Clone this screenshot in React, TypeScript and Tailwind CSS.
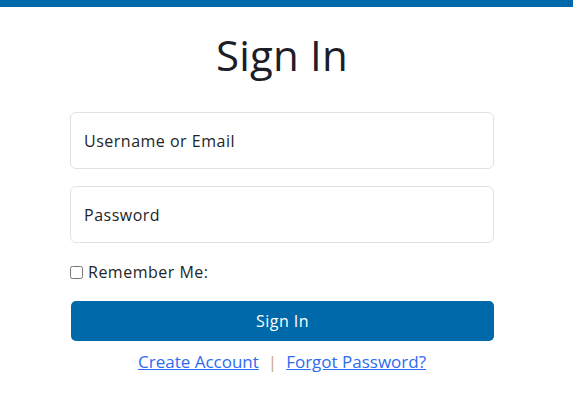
export default function App() {
  return (
    <div className="min-h-[401px] bg-white font-['Open_Sans',sans-serif] tracking-[0.5px] text-[#212529]">
      <div className="h-[7px] bg-[#0069aa]" />
      <div className="ml-[70px] w-[424px]">
        <h1 className="mt-[23px] text-center text-[42px] leading-[50px] font-normal tracking-[0.2px] text-[#1d1d28]">Sign In</h1>
        <div className="mt-[32px] flex flex-col gap-[17px]">
          <div className="flex h-[57px] items-center rounded-[6px] border border-[#dee2e6] px-[13px] text-[16px]">
            Username or Email
          </div>
          <div className="flex h-[57px] items-center rounded-[6px] border border-[#dee2e6] px-[13px] text-[16px]">
            Password
          </div>
        </div>
        <label className="mt-[17px] flex items-center gap-[5px] text-[16px]">
          <input type="checkbox" className="m-0 h-[13px] w-[13px]" />
          Remember Me:
        </label>
        <button className="mt-[17px] ml-px h-[40px] w-[423px] rounded-[5px] bg-[#0069aa] text-[16px] text-white">
          Sign In
        </button>
        <div className="mt-[8px] flex justify-center gap-[9px] text-[17px] tracking-normal">
          <a href="#" className="text-[#2f6bf0] underline">Create Account</a>
          <span className="text-[#c9a87c]">|</span>
          <a href="#" className="text-[#2f6bf0] underline">Forgot Password?</a>
        </div>
      </div>
    </div>
  );
}
